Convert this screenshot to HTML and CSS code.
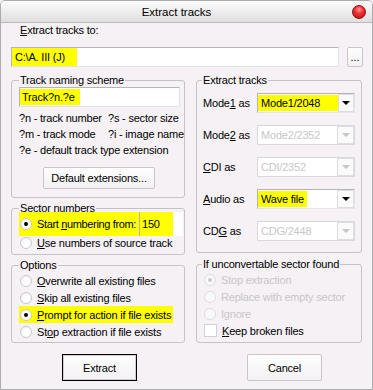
FILE: index.html
```html
<!DOCTYPE html>
<html lang="en">
<head>
    <meta charset="UTF-8">
    <meta name="viewport" content="width=device-width, initial-scale=1.0">
    <title>Extract tracks</title>
    <link rel="stylesheet" href="styles.css">
</head>
<body>
    <div class="window">
        <div class="titlebar">
            <div class="title">Extract tracks</div>
            <div class="close-btn"></div>
        </div>

        <div class="content">
            <div class="path-label"><u>E</u>xtract tracks to:</div>
            <div class="path-row">
                <div class="textbox path-box"><span class="mark">C:\A. III (J)</span></div>
                <div class="button browse-btn">...</div>
            </div>

            <div class="columns">
                <div class="col col-left">
                    <div class="group naming">
                        <div class="group-title">Track naming scheme</div>
                        <div class="textbox naming-box"><span class="mark">Track?n.?e</span></div>
                        <div class="hints">
                            <span>?n - track number</span><span>?s - sector size</span>
                            <span>?m - track mode</span><span>?i - image name</span>
                            <span class="wide">?e - default track type extension</span>
                        </div>
                        <div class="button ext-btn">Default extensions...</div>
                    </div>

                    <div class="group sector">
                        <div class="group-title">Sector numbers</div>
                        <div class="start-row">
                            <div class="start-label"><span class="radio on"></span><span class="start-text">Start <u>n</u>umbering from:</span></div>
                            <div class="num-box"><span class="mark">150</span></div>
                        </div>
                        <div class="opt short"><span class="radio"></span><span><u>U</u>se numbers of source track</span></div>
                    </div>

                    <div class="group options">
                        <div class="group-title">Options</div>
                        <div class="opt"><span class="radio"></span><span><u>O</u>verwrite all existing files</span></div>
                        <div class="opt"><span class="radio"></span><span><u>S</u>kip all existing files</span></div>
                        <div class="opt marked"><span class="radio on"></span><span><u>P</u>rompt for action if file exists</span></div>
                        <div class="opt"><span class="radio"></span><span>St<u>o</u>p extraction if file exists</span></div>
                    </div>

                    <div class="button-row">
                        <div class="button dialog-btn btn-default">Extract</div>
                    </div>
                </div>

                <div class="col col-right">
                    <div class="group tracks">
                        <div class="group-title">Extract tracks</div>
                        <div class="combo-row">
                            <span class="combo-label">Mode<u>1</u> as</span>
                            <div class="combo">
                                <div class="combo-text"><span class="mark mode-mark">Mode1/2048</span></div>
                                <div class="combo-btn"><span class="arrow"></span></div>
                            </div>
                        </div>
                        <div class="combo-row">
                            <span class="combo-label">Mode<u>2</u> as</span>
                            <div class="combo disabled">
                                <div class="combo-text"><span class="plain">Mode2/2352</span></div>
                                <div class="combo-btn"><span class="arrow"></span></div>
                            </div>
                        </div>
                        <div class="combo-row">
                            <span class="combo-label"><u>C</u>DI as</span>
                            <div class="combo disabled">
                                <div class="combo-text"><span class="plain">CDI/2352</span></div>
                                <div class="combo-btn"><span class="arrow"></span></div>
                            </div>
                        </div>
                        <div class="combo-row">
                            <span class="combo-label"><u>A</u>udio as</span>
                            <div class="combo">
                                <div class="combo-text"><span class="mark">Wave file</span></div>
                                <div class="combo-btn"><span class="arrow"></span></div>
                            </div>
                        </div>
                        <div class="combo-row">
                            <span class="combo-label">CD<u>G</u> as</span>
                            <div class="combo disabled">
                                <div class="combo-text"><span class="plain">CDG/2448</span></div>
                                <div class="combo-btn"><span class="arrow"></span></div>
                            </div>
                        </div>
                    </div>

                    <div class="group unconv">
                        <div class="group-title">If unconvertable sector found</div>
                        <div class="opt disabled"><span class="radio on"></span><span>Stop extraction</span></div>
                        <div class="opt disabled"><span class="radio"></span><span>Replace with empty sector</span></div>
                        <div class="opt disabled"><span class="radio"></span><span>Ignore</span></div>
                        <div class="opt"><span class="checkbox"></span><span><u>K</u>eep broken files</span></div>
                    </div>

                    <div class="button-row">
                        <div class="button dialog-btn">Cancel</div>
                    </div>
                </div>
            </div>
        </div>
    </div>
</body>
</html>
```

FILE: styles.css
```css
* {
    box-sizing: border-box;
}
body {
    margin: 0;
    font-family: 'Liberation Sans', Arial, sans-serif;
    font-size: 11px;
    letter-spacing: -0.2px;
    color: #000;
    background-color: #f5f1f5;
}
u {
    text-decoration-thickness: 1px;
    text-underline-offset: 1px;
}
.window {
    width: 373px;
    height: 390px;
    border: 1px solid #aeabae;
    border-radius: 5px 5px 0 0;
    background-color: #f5f1f5;
    overflow: hidden;
}
.titlebar {
    display: flex;
    align-items: center;
    height: 22px;
    background: linear-gradient(#fbfbfb, #efefef 45%, #dedede);
    border-bottom: 1px solid #b9b9b9;
}
.title {
    flex: 1;
    text-align: center;
    font-size: 11.5px;
    letter-spacing: 0;
}
.close-btn {
    width: 14px;
    height: 14px;
    margin-right: 6px;
    border-radius: 50%;
    border: 1px solid #8a1010;
    background: radial-gradient(circle at 50% 30%, #ff9a9a 0, #f23030 40%, #b80c0c 100%);
}
.content {
    padding: 0 9px 0 10px;
}
.path-label {
    margin: 1px 0 0 9px;
    height: 13px;
    line-height: 13px;
}
.path-row {
    display: flex;
    margin-top: 10px;
    height: 20px;
}
.textbox {
    display: flex;
    background-color: #fff;
    border: 1px solid;
    border-color: #b7b4b7 #e6e3e6 #e6e3e6 #b7b4b7;
}
.mark {
    display: flex;
    align-items: center;
    background-color: #ffff00;
}
.path-box {
    width: 329px;
}
.path-box .mark {
    width: 65px;
    padding-left: 3px;
}
.button {
    display: flex;
    align-items: center;
    justify-content: center;
    background: linear-gradient(#fefefe, #f3f1f3);
    border: 1px solid #c9c6c9;
    border-radius: 2px;
}
.browse-btn {
    width: 16px;
    margin-left: 8px;
    letter-spacing: 0;
}
.columns {
    display: flex;
    gap: 11px;
    margin-top: 13px;
}
.col-left {
    width: 174px;
}
.col-right {
    width: 166px;
}
.group {
    border: 1px solid #c6c3c6;
    border-radius: 3px;
}
.group-title {
    display: table;
    margin: -7px 0 0 7px;
    padding: 0 1px;
    line-height: 13px;
    background-color: #f5f1f5;
}
.col-right .group-title {
    margin-left: 5px;
}
.naming {
    height: 118px;
}
.naming-box {
    width: 161px;
    height: 20px;
    margin-left: 7px;
}
.naming-box .mark {
    width: 60px;
    margin: 1px 0 1px 0;
    padding-left: 2px;
}
.hints {
    display: grid;
    grid-template-columns: 89px auto;
    margin: 3px 0 0 7px;
    line-height: 16px;
    white-space: nowrap;
}
.hints .wide {
    grid-column: 1 / 3;
}
.ext-btn {
    width: 112px;
    height: 22px;
    margin: 9px 0 0 31px;
}
.sector {
    height: 47px;
    margin-top: 10px;
}
.start-row {
    display: flex;
    height: 24px;
    margin: -3px 0 0 7px;
}
.start-label {
    display: flex;
    align-items: center;
    flex: none;
    width: 120px;
    padding-left: 1px;
    white-space: nowrap;
    background-color: #ffff00;
}
.start-text {
    letter-spacing: -0.35px;
}
.num-box {
    display: flex;
    flex: none;
    width: 44px;
    background-color: #fff;
    border-left: 1px solid #b7b4b7;
}
.num-box .mark {
    width: 33px;
    padding-left: 2px;
}
.opt {
    display: flex;
    align-items: center;
    width: fit-content;
    height: 17px;
    margin-left: 7px;
    padding: 0 2px 0 1px;
    white-space: nowrap;
}
.opt.short {
    height: 13px;
}
.col-right .opt {
    margin-left: 6px;
}
.opt.marked {
    background-color: #ffff00;
}
.opt.disabled {
    color: #c9c6c9;
}
.radio {
    display: flex;
    align-items: center;
    justify-content: center;
    flex: none;
    width: 12px;
    height: 12px;
    margin-right: 5px;
    border: 1px solid #cbc8cb;
    border-radius: 50%;
    background: radial-gradient(circle at 60% 60%, #fff 40%, #ecebec);
}
.radio.on::after {
    content: "";
    width: 4px;
    height: 4px;
    border-radius: 50%;
    background-color: #000;
}
.disabled .radio {
    border-color: #dedbde;
    background: #faf9fa;
}
.disabled .radio.on::after {
    background-color: #c9c6c9;
}
.checkbox {
    flex: none;
    width: 13px;
    height: 13px;
    margin-right: 5px;
    background-color: #fff;
    border: 1px solid #d4d1d4;
}
.options {
    height: 78px;
    margin-top: 10px;
}
.button-row {
    margin-top: 11px;
}
.dialog-btn {
    width: 75px;
    height: 27px;
    margin-left: 51px;
}
.btn-default {
    border: 1px solid #000;
    border-radius: 0;
    box-shadow: inset 0 0 0 1px #d2cfd2;
}
.tracks {
    height: 173px;
}
.combo-row {
    display: flex;
    align-items: center;
    height: 32px;
    white-space: nowrap;
}
.combo-row:first-of-type {
    margin-top: -1px;
}
.combo-label {
    width: 54px;
    margin-left: 6px;
}
.combo {
    display: flex;
    width: 98px;
    height: 20px;
    background-color: #fff;
    border: 1px solid;
    border-color: #b7b4b7 #e6e3e6 #e6e3e6 #b7b4b7;
}
.combo-text {
    display: flex;
    flex: 1;
    padding: 1px 0;
}
.combo-text .mark {
    padding: 0 3px 0 3px;
}
.mode-mark {
    width: 80px;
}
.combo-text .plain {
    display: flex;
    align-items: center;
    padding-left: 3px;
}
.combo-btn {
    display: flex;
    align-items: center;
    justify-content: center;
    width: 17px;
    border: 1px solid #e0dde0;
    background-color: #fbfafb;
}
.arrow {
    width: 0;
    height: 0;
    border-left: 4px solid transparent;
    border-right: 4px solid transparent;
    border-top: 4px solid #000;
}
.combo.disabled {
    border-color: #dad7da;
    color: #c9c6c9;
}
.combo.disabled .arrow {
    border-top-color: #c9c6c9;
}
.unconv {
    height: 79px;
    margin-top: 11px;
}
```
